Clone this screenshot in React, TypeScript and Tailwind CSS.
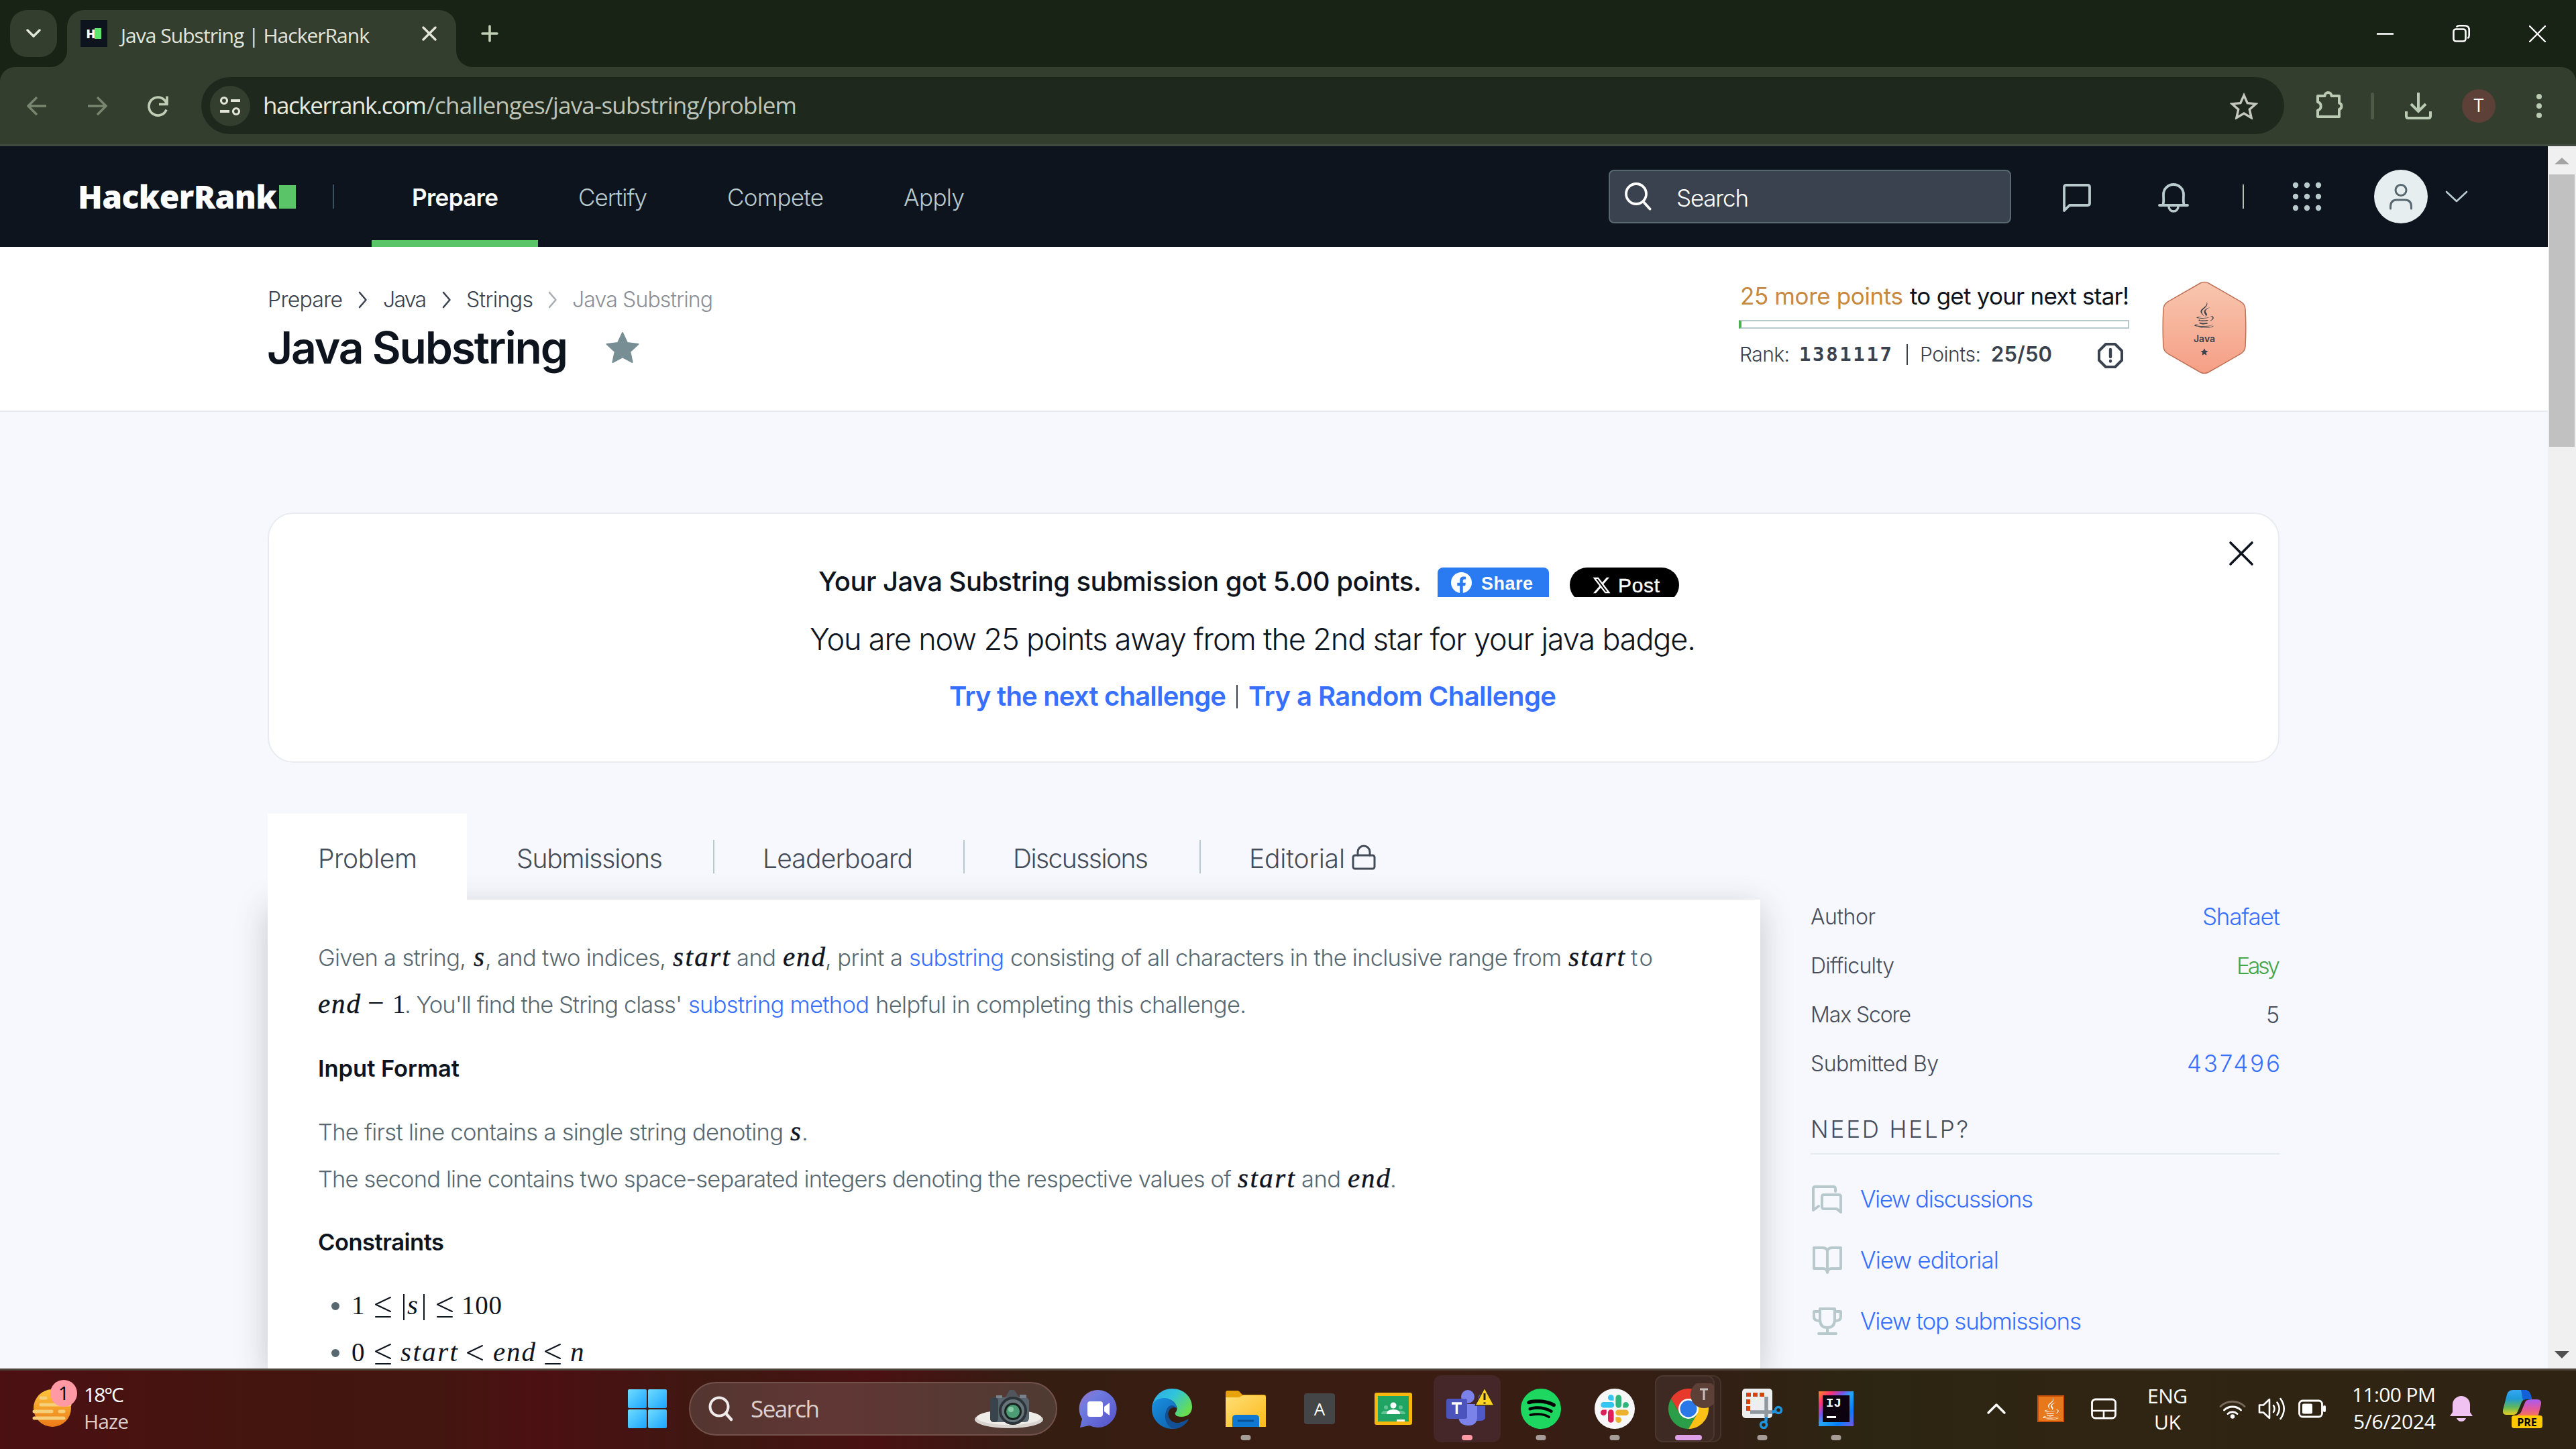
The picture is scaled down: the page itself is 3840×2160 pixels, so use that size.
import { useLayoutEffect, useRef, type ReactNode } from "react";
import { FaJava } from "react-icons/fa";
import { SiSpotify } from "react-icons/si";

/* Spreads a run of text evenly over the width given by its classes. */
function Fit({ className = "", children }: { className?: string; children: string }) {
  const box = useRef<HTMLSpanElement>(null);
  const run = useRef<HTMLSpanElement>(null);
  useLayoutEffect(() => {
    if (!box.current || !run.current) return;
    run.current.style.letterSpacing = "0px";
    const natural = run.current.getBoundingClientRect().width;
    const n = Math.max(1, children.length - 1);
    run.current.style.letterSpacing = `${(box.current.clientWidth - natural) / n}px`;
  }, [children]);
  return (
    <span ref={box} className={`block shrink-0 whitespace-nowrap ${className}`}>
      <span ref={run}>{children}</span>
    </span>
  );
}

function Icon({ w, h, className = "", children }: { w: number; h: number; className?: string; children: ReactNode }) {
  return (
    <svg
      width={w}
      height={h}
      viewBox={`0 0 ${w} ${h}`}
      fill="none"
      stroke="currentColor"
      strokeLinecap="round"
      strokeLinejoin="round"
      className={`block shrink-0 ${className}`}
    >
      {children}
    </svg>
  );
}

const UI = "font-['Open_Sans','Noto_Sans',sans-serif]";

function TabStrip() {
  return (
    <div className={`flex h-[100px] shrink-0 bg-[#192315] pl-[15px] ${UI}`}>
      <div className="mt-[15px] flex size-[70px] items-center justify-center rounded-[25px] bg-[#333e2f] text-[#e0e6d8]">
        <Icon w={22} h={14}><path d="M2 2l9 9 9-9" strokeWidth="3.4" /></Icon>
      </div>
      <Icon w={25} h={25} className="-ml-[10px] mt-[75px]"><path d="M25 0V25H0C14 25 25 14 25 0Z" fill="#333e2f" stroke="none" /></Icon>
      <div className="mt-[15px] flex h-[85px] w-[580px] items-center rounded-t-[25px] bg-[#333e2f] pb-[15px] pl-[20px]">
        <div className="flex size-[40px] items-center justify-center bg-[#0e141e]">
          <span className="text-[18px] leading-none font-extrabold tracking-[-1px] text-white">H</span>
          <span className="h-[16px] w-[10px] bg-[#5ae86b]" />
        </div>
        <Fit className="ml-[20px] mt-[4px] w-[371px] text-[30px] text-[#e2e6da]">Java Substring | HackerRank</Fit>
        <Icon w={22} h={22} className="ml-[78px] text-[#e2e6da]"><path d="M2 2l18 18M20 2L2 20" strokeWidth="3.4" /></Icon>
      </div>
      <Icon w={25} h={25} className="mt-[75px]"><path d="M0 0V25H25C11 25 0 14 0 0Z" fill="#333e2f" stroke="none" /></Icon>
      <Icon w={26} h={26} className="ml-[12px] mt-[37px] text-[#c0ceb5]"><path d="M13 2v22M2 13h22" strokeWidth="3.6" /></Icon>
      <div className="ml-auto mr-[45px] flex h-[100px] items-center gap-[88px] text-white">
        <Icon w={25} h={25}><path d="M0 12.500h25" strokeWidth="2.600" strokeLinecap="butt" /></Icon>
        <Icon w={26} h={26}>
          <rect x="1.500" y="6.500" width="18" height="18" rx="3.500" strokeWidth="2.600" />
          <path d="M6.500 2.500Q7.500 1.300 10 1.300H18Q24.700 1.300 24.700 8V15.500Q24.700 18.500 23.200 19.300" strokeWidth="2.600" />
        </Icon>
        <Icon w={25} h={25}><path d="M1 1l23 23M24 1L1 24" strokeWidth="2.400" /></Icon>
      </div>
    </div>
  );
}

function Toolbar() {
  return (
    <div className="shrink-0 bg-[#192315]">
      <div className={`flex h-[115px] items-center rounded-t-[22px] bg-[#333e2f] pl-[40px] ${UI}`}>
        <Icon w={30} h={30} className="text-[#78856f]"><path d="M15 2L2 15l13 13M2 15h27" strokeWidth="3.400" strokeLinecap="butt" strokeLinejoin="miter" /></Icon>
        <Icon w={30} h={30} className="ml-[60px] text-[#78856f]"><path d="M15 2l13 13-13 13M28 15H1" strokeWidth="3.400" strokeLinecap="butt" strokeLinejoin="miter" /></Icon>
        <Icon w={32} h={32} className="ml-[59px] text-[#c0ceb5]">
          <path d="M29 21.500A13.500 13.500 0 1 1 26.500 7.500L29.500 12" strokeWidth="3.600" strokeLinecap="butt" />
          <path d="M30 1.500V13.500H18" strokeWidth="3.600" strokeLinecap="butt" strokeLinejoin="miter" />
        </Icon>
        <div className="ml-[49px] flex h-[85px] w-[3105px] items-center rounded-full bg-[#1f281d] pl-[13px]">
          <div className="flex size-[60px] items-center justify-center rounded-full bg-[#333e2f] text-[#e2e6da]">
            <Icon w={32} h={30}>
              <circle cx="7" cy="7" r="4.500" strokeWidth="3.200" />
              <path d="M17 7h14M1 23h14" strokeWidth="4" strokeLinecap="butt" />
              <circle cx="25" cy="23" r="4.500" strokeWidth="3.200" />
            </Icon>
          </div>
          <Fit className="ml-[19px] w-[244px] text-[35px] text-[#e6eae0]">hackerrank.com</Fit>
          <Fit className="w-[552px] text-[35px] text-[#bfc4b9]">/challenges/java-substring/problem</Fit>
          <Icon w={42} h={40} className="ml-auto mr-[39px] text-[#c5c9be]">
            <path d="M21 4l5.200 11.600 12.600 1.200-9.500 8.400 2.800 12.400L21 31l-11.100 6.600 2.800-12.400-9.500-8.400 12.600-1.200z" strokeWidth="3.400" strokeLinejoin="miter" />
          </Icon>
        </div>
        <Icon w={44} h={44} className="-mt-[4px] ml-[46px] text-[#bccbb3]">
          <path d="M5 9H14.500A5 5 0 0 1 24.500 9H36V19.500A5 5 0 0 1 36 29V40H4V30.500A6.500 6.500 0 0 0 4 18V9Z" strokeWidth="4" />
        </Icon>
        <span className="ml-[39px] h-[40px] w-[5px] rounded bg-[#4c5a46]" />
        <Icon w={42} h={42} className="ml-[45px] text-[#bccbb3]">
          <path d="M21 1V29M10 18L21 29L32 18" strokeWidth="4" strokeLinecap="butt" strokeLinejoin="miter" />
          <path d="M3 29V36Q3 39 6 39H36Q39 39 39 36V29" strokeWidth="4" strokeLinecap="butt" />
        </Icon>
        <span className="ml-[44px] flex size-[50px] items-center justify-center rounded-full bg-[#5d4037] text-[27px] text-white">T</span>
        <Icon w={8} h={38} className="ml-[61px] text-[#bccbb3]">
          <g fill="currentColor" stroke="none"><circle cx="4" cy="5" r="4" /><circle cx="4" cy="19" r="4" /><circle cx="4" cy="33" r="4" /></g>
        </Icon>
      </div>
      <div className="h-[3px] bg-[#434a41]" />
    </div>
  );
}

function NavBar() {
  return (
    <div className="flex h-[150px] shrink-0 items-center bg-[#0e141e] pl-[116px] text-[35px] font-light text-[#b9cacd]">
      <Fit className="w-[297px] font-['Open_Sans',sans-serif] text-[48px] font-extrabold text-white">HackerRank</Fit>
      <span className="ml-[3px] h-[35px] w-[25px] bg-[#5ac568]" />
      <span className="ml-[55px] h-[36px] w-[2px] bg-[#39505c]" />
      <div className="ml-[56px] flex h-[150px] w-[248px] flex-col justify-between bg-[#0e141e]">
        <span className="h-[10px]" />
        <Fit className="ml-[60px] mt-[2px] w-[129px] font-semibold text-white">Prepare</Fit>
        <span className="h-[10px] w-full bg-[#5ac568]" />
      </div>
      <Fit className="ml-[60px] mt-[2px] w-[103px]">Certify</Fit>
      <Fit className="ml-[119px] mt-[2px] w-[144px]">Compete</Fit>
      <Fit className="ml-[119px] mt-[2px] w-[91px]">Apply</Fit>
      <div className="ml-[960px] flex h-[80px] w-[600px] items-center rounded-[8px] border-2 border-[#576871] bg-[#39424e] pl-[21px] text-white">
        <Icon w={42} h={42}><circle cx="18" cy="17" r="15" strokeWidth="3.800" /><path d="M28.500 28.500L38.500 39.500" strokeWidth="4" /></Icon>
        <Fit className="ml-[36px] mt-[4px] w-[108px]">Search</Fit>
      </div>
      <Icon w={44} h={44} className="ml-[76px] mt-[4px]"><path d="M3 41V6Q3 3 6 3H38Q41 3 41 6V30Q41 33 38 33H11L3 41Z" strokeWidth="3.800" /></Icon>
      <Icon w={48} h={46} className="ml-[98px] mt-[2px]">
        <path d="M3 35H45M8 35C10 31 9 26 9 19A15 15 0 0 1 39 19C39 26 38 31 40 35" strokeWidth="3.800" />
        <path d="M17 37A7 7 0 0 0 31 37" strokeWidth="3.600" />
      </Icon>
      <span className="ml-[79px] h-[36px] w-[2px] bg-[#b9c0b4]" />
      <Icon w={44} h={44} className="ml-[72px]">
        <g fill="currentColor" stroke="none">
          {[5, 22, 39].map((y) => [5, 22, 39].map((x) => <circle key={`${x}-${y}`} cx={x} cy={y} r="4.200" />))}
        </g>
      </Icon>
      <span className="ml-[78px] flex size-[80px] items-center justify-center rounded-full bg-[#e7eef0] text-[#576871]">
        <Icon w={36} h={40}><circle cx="18" cy="10.500" r="8" strokeWidth="3" /><path d="M2.500 38V35Q2.500 25 12 25H24Q33.500 25 33.500 35V38" strokeWidth="3" /></Icon>
      </span>
      <Icon w={34} h={20} className="ml-[26px]"><path d="M2 3l15 14L32 3" strokeWidth="2.600" /></Icon>
    </div>
  );
}

function Crumb({ className }: { className: string }) {
  return <Icon w={14} h={26} className={className}><path d="M2 2l9.500 11L2 24" strokeWidth="2.600" /></Icon>;
}

function ProblemHeader() {
  return (
    <div className="flex h-[246px] shrink-0 border-b-2 border-[#ebebf2] bg-white pl-[399px] text-[#39424e]">
      <div className="w-[2193px] pt-[54px]">
        <div className="flex h-[50px] items-center text-[32px] font-light">
          <Fit className="w-[112px]">Prepare</Fit>
          <Crumb className="ml-[23px]" />
          <Fit className="ml-[23px] w-[65px]">Java</Fit>
          <Crumb className="ml-[23px]" />
          <Fit className="ml-[22px] w-[100px]">Strings</Fit>
          <Crumb className="ml-[22px] text-[#a9adb2]" />
          <Fit className="ml-[22px] w-[210px] text-[#8c9096]">Java Substring</Fit>
        </div>
        <div className="mt-[1px] flex h-[90px] items-center">
          <Fit className="-ml-[1px] w-[449px] text-[66px] leading-[90px] font-[580] text-[#0e141e]">Java Substring</Fit>
          <Icon w={52} h={50} className="ml-[55px] text-[#778f94]">
            <path d="M26 3l7 15 16.500 2-12.200 11.200L40.600 47 26 39.300 11.400 47l3.300-15.800L2.500 20 19 18z" fill="currentColor" strokeWidth="2" />
          </Icon>
        </div>
      </div>
      <div className="w-[582px] pt-[48px]">
        <div className="flex h-[50px] items-center text-[35px] text-[#0e141e]">
          <Fit className="ml-[2px] w-[243px] text-[#c78840]">25 more points</Fit>
          <Fit className="ml-[10px] w-[327px]">to get your next star!</Fit>
        </div>
        <div className="mt-[11px] h-[13px] border-2 border-l-4 border-[#b7c9cc] border-l-[#4caf50]" />
        <div className="mt-[13px] flex h-[50px] items-center text-[30px] font-light">
          <Fit className="ml-[1px] w-[75px]">Rank:</Fit>
          <Fit className="ml-[14px] mt-[2px] w-[138px] font-['DejaVu_Sans_Mono',monospace] text-[29px] font-bold">1381117</Fit>
          <span className="ml-[22px] h-[31px] w-[2px] bg-[#39424e]" />
          <Fit className="ml-[18px] w-[91px]">Points:</Fit>
          <Fit className="ml-[15px] w-[91px] text-[31px] font-semibold">25/50</Fit>
          <Icon w={40} h={40} className="ml-[67px] mt-[4px]">
            <path d="M13 3H27L37 13V27L27 37H13L3 27V13Z" strokeWidth="4" />
            <path d="M20 11V22M20 28V28.500" strokeWidth="4.400" />
          </Icon>
        </div>
      </div>
      <div className="relative ml-[49px] mt-[51px] h-[139px] w-[126px]">
        <svg viewBox="0 0 126 140" className="absolute inset-0 size-full">
          <defs>
            <linearGradient id="badge" x1="0" y1="0" x2="0" y2="1"><stop offset="0" stopColor="#f8c6ae" /><stop offset="1" stopColor="#f59f86" /></linearGradient>
          </defs>
          <path d="M57 3Q63 0 69 3L118 31Q124 35 124.500 42Q126 70 124.500 98Q124 105 118 109L69 137Q63 140 57 137L8 109Q2 105 1.500 98Q0 70 1.500 42Q2 35 8 31Z" fill="url(#badge)" stroke="#bd7258" strokeWidth="1.500" />
          <path d="M63 101l1.700 3.500 3.800.5-2.800 2.600.7 3.900-3.400-1.900-3.400 1.900.7-3.900-2.800-2.600 3.800-.5z" fill="#39424e" />
        </svg>
        <FaJava className="absolute left-[43px] top-[31px] size-[39px] text-[#39424e]" />
        <span className="absolute left-0 top-[74px] w-full text-center text-[14px] leading-[24px] font-semibold">Java</span>
      </div>
    </div>
  );
}

function ResultCard() {
  return (
    <div className="relative h-[373px] w-[2999px] rounded-[38px] border-2 border-[#e9ebf1] bg-white pt-[71px] text-[#0e141e]">
      <div className="ml-[819px] flex h-[60px] items-center text-[40px]">
        <Fit className="w-[899px] font-medium">Your Java Substring submission got 5.00 points.</Fit>
        <span className="ml-[24px] mt-[9px] flex h-[44px] w-[166px] items-center self-start rounded-t-[8px] bg-[#2a7af2] font-['Liberation_Sans',sans-serif] text-[27px] font-bold text-white">
          <svg viewBox="0 0 30 30" className="ml-[20px] size-[31px]">
            <circle cx="15" cy="15" r="15" fill="#fff" />
            <path d="M12.700 30V19.500H9V15.200H12.700V12C12.700 8.200 14.900 6.200 18.200 6.200C19.800 6.200 21.300 6.500 21.300 6.500V10.100H19.500C17.700 10.100 17.200 11.200 17.200 12.300V15.200H21.200L20.500 19.500H17.200V30Z" fill="#2a7af2" />
          </svg>
          <Fit className="ml-[14px] mt-[4px] w-[77px]">Share</Fit>
        </span>
        <span className="ml-[31px] mt-[9px] h-[44px] w-[163px] self-start overflow-hidden">
          <span className="flex h-[52px] items-center rounded-full bg-black pl-[33px] font-['Liberation_Sans',sans-serif] text-[30px] text-white">
            <svg viewBox="0 0 24 24" className="size-[29px]" fill="#fff"><path d="M18.244 2.250h3.308l-7.227 8.260 8.502 11.240H16.170l-5.214-6.817L4.990 21.750H1.680l7.730-8.835L1.254 2.250H8.080l4.713 6.231zm-1.161 17.520h1.833L7.084 4.126H5.117z" /></svg>
            <Fit className="ml-[10px] w-[62px] [-webkit-text-stroke:0.4px_white]">Post</Fit>
          </span>
        </span>
      </div>
      <Fit className="ml-[806px] mt-[26px] h-[60px] w-[1321px] text-[45px] leading-[60px] font-light">You are now 25 points away from the 2nd star for your java badge.</Fit>
      <div className="ml-[1014px] mt-[25px] flex h-[60px] items-center text-[40px] font-semibold text-[#3770ff]">
        <Fit className="w-[413px]">Try the next challenge</Fit>
        <span className="ml-[15px] h-[35px] w-[2px] bg-[#39424e]" />
        <Fit className="ml-[16px] w-[459px]">Try a Random Challenge</Fit>
      </div>
      <Icon w={38} h={38} className="absolute right-[36px] top-[40px]"><path d="M3 3l32 32M35 3L3 35" strokeWidth="3.600" /></Icon>
    </div>
  );
}

function Tabs() {
  return (
    <div className="flex h-[128px] items-center text-[39px] font-light text-[#454c59]">
      <div className="relative z-10 flex h-[128px] w-[297px] items-center bg-white pl-[75px]"><Fit className="mt-[7px] w-[148px]">Problem</Fit></div>
      <Fit className="ml-[74px] mt-[7px] w-[218px]">Submissions</Fit>
      <span className="ml-[75px] h-[50px] w-[2px] bg-[#b7c9cc]" />
      <Fit className="ml-[72px] mt-[7px] w-[224px]">Leaderboard</Fit>
      <span className="ml-[75px] h-[50px] w-[2px] bg-[#b7c9cc]" />
      <Fit className="ml-[72px] mt-[7px] w-[202px]">Discussions</Fit>
      <span className="ml-[76px] h-[50px] w-[2px] bg-[#b7c9cc]" />
      <Fit className="ml-[72px] mt-[7px] w-[143px]">Editorial</Fit>
      <Icon w={36} h={38} className="ml-[10px] mt-[2px]">
        <rect x="2" y="16" width="32" height="20" rx="3" strokeWidth="3" />
        <path d="M9 16V11A9 9 0 0 1 27 11V16" strokeWidth="3" />
      </Icon>
    </div>
  );
}

const MATH = "font-['Liberation_Serif',serif] italic text-[41px] leading-none text-[#0e141e] [-webkit-text-stroke:0.4px_#0e141e]";
const MLIST = "font-['Liberation_Serif',serif] italic text-[41px] leading-none text-[#0e141e]";
const NUM = "font-['Liberation_Serif',serif] text-[39px] leading-none text-[#0e141e]";

function Leq() {
  return <Icon w={26} h={34} className="translate-y-[7px] text-[#0e141e]"><path d="M24 2L2 12.500L24 23M2 31H24" strokeWidth="2" /></Icon>;
}

/* Row of math symbols that keeps the baseline of the surrounding body text. */
function ConstraintRow({ children }: { children: ReactNode }) {
  return (
    <div className="flex h-[70px] items-baseline">
      <span className="w-0">{"\u200b"}</span>
      <span className="ml-[20px] mr-[18px] size-[12px] -translate-y-[6px] rounded-full bg-[#576871]" />
      {children}
    </div>
  );
}

function Statement() {
  return (
    <div className="h-[699px] w-[2225px] bg-white pl-[75px] pt-[52px] text-[34.500px] leading-[70px] font-light text-[#576871] shadow-[0_12px_46px_rgba(40,40,50,0.24)]">
      <div className="flex h-[70px] items-baseline">
        <Fit className="w-[221px]">Given a string,</Fit>
        <Fit className={`ml-[11px] w-[17px] ${MATH}`}>s</Fit>
        <Fit className="w-[270px]">, and two indices,</Fit>
        <Fit className={`ml-[10px] w-[85px] ${MATH}`}>start</Fit>
        <Fit className="ml-[10px] w-[59px]">and</Fit>
        <Fit className={`ml-[10px] w-[63px] ${MATH}`}>end</Fit>
        <Fit className="w-[116px]">, print a</Fit>
        <Fit className="ml-[9px] w-[142px] text-[#3770ff]">substring</Fit>
        <Fit className="ml-[9px] w-[822px]">consisting of all characters in the inclusive range from</Fit>
        <Fit className={`ml-[10px] w-[84px] ${MATH}`}>start</Fit>
        <Fit className="ml-[9px] w-[33px]">to</Fit>
      </div>
      <div className="flex h-[70px] items-baseline">
        <Fit className={`w-[63px] ${MATH}`}>end</Fit>
        <span className={`ml-[9px] w-[29px] text-center text-[44px] font-['Liberation_Serif',serif] leading-none text-[#0e141e]`}>−</span>
        <Fit className={`ml-[10px] w-[18px] ${NUM}`}>1</Fit>
        <Fit className="w-[414px]">. You'll find the String class'</Fit>
        <Fit className="ml-[9px] w-[270px] text-[#3770ff]">substring method</Fit>
        <Fit className="ml-[9px] w-[553px]">helpful in completing this challenge.</Fit>
      </div>
      <Fit className="mt-[25px] w-[211px] font-semibold text-[#0e141e]">Input Format</Fit>
      <div className="mt-[25px] flex h-[70px] items-baseline">
        <Fit className="w-[694px]">The first line contains a single string denoting</Fit>
        <Fit className={`ml-[10px] w-[17px] ${MATH}`}>s</Fit>
        <Fit className="w-[10px]">.</Fit>
      </div>
      <div className="flex h-[70px] items-baseline">
        <Fit className="w-[1362px]">The second line contains two space-separated integers denoting the respective values of</Fit>
        <Fit className={`ml-[9px] w-[85px] ${MATH}`}>start</Fit>
        <Fit className="ml-[10px] w-[59px]">and</Fit>
        <Fit className={`ml-[10px] w-[63px] ${MATH}`}>end</Fit>
        <Fit className="w-[10px]">.</Fit>
      </div>
      <Fit className="mt-[24px] w-[188px] font-semibold text-[#0e141e]">Constraints</Fit>
      <div className="h-[25px]" />
      <ConstraintRow>
        <Fit className={`mr-[15px] w-[19px] ${NUM}`}>1</Fit>
        <Leq />
        <span className="ml-[17px] h-[39px] w-[2px] translate-y-[9px] bg-[#0e141e]" />
        <Fit className={`ml-[4px] w-[17px] ${MLIST}`}>s</Fit>
        <span className="ml-[7px] mr-[17px] h-[39px] w-[2px] translate-y-[9px] bg-[#0e141e]" />
        <Leq />
        <Fit className={`ml-[12px] w-[60px] ${NUM}`}>100</Fit>
      </ConstraintRow>
      <ConstraintRow>
        <Fit className={`mr-[14px] w-[20px] ${NUM}`}>0</Fit>
        <Leq />
        <Fit className={`ml-[13px] w-[85px] ${MLIST}`}>start</Fit>
        <Icon w={26} h={26} className="ml-[13px] mr-[14px] translate-y-[1px] text-[#0e141e]"><path d="M24 2L2 12.500L24 23" strokeWidth="2" /></Icon>
        <Fit className={`mr-[13px] w-[63px] ${MLIST}`}>end</Fit>
        <Leq />
        <Fit className={`ml-[13px] w-[24px] ${MLIST}`}>n</Fit>
      </ConstraintRow>
    </div>
  );
}

function Sidebar() {
  return (
    <div className="ml-[75px] w-[700px] pt-[117px] font-light text-[#454c59]">
      <div className="flex h-[73px] items-center justify-between text-[32px]"><Fit className="w-[97px]">Author</Fit><Fit className="w-[116px] text-[35px] text-[#3770ff]">Shafaet</Fit></div>
      <div className="flex h-[73px] items-center justify-between text-[32px]"><Fit className="w-[125px]">Difficulty</Fit><Fit className="w-[65px] text-[34px] text-[#43a64b]">Easy</Fit></div>
      <div className="flex h-[73px] items-center justify-between text-[32px]"><Fit className="w-[150px]">Max Score</Fit><Fit className="w-[21px] text-[34px]">5</Fit></div>
      <div className="flex h-[73px] items-center justify-between text-[32px]"><Fit className="w-[191px]">Submitted By</Fit><Fit className="w-[139px] text-[35px] text-[#3770ff]">437496</Fit></div>
      <div className="mt-[36px] h-[63px] border-b-2 border-[#e4ecee] text-[35px] leading-[50px]"><Fit className="w-[235px]">NEED HELP?</Fit></div>
      <div className="mt-[21px] text-[35px] text-[#3770ff]">
        <div className="flex h-[91px] items-center">
          <Icon w={48} h={44} className="text-[#b7c9cc]">
            <path d="M37 10V6Q37 3 34 3H7Q4 3 4 6V38L12 32" strokeWidth="4" />
            <path d="M20 15H42Q45 15 45 18V41L39 36H20Q17 36 17 33V18Q17 15 20 15Z" strokeWidth="4" />
          </Icon>
          <Fit className="ml-[26px] w-[258px]">View discussions</Fit>
        </div>
        <div className="flex h-[91px] items-center">
          <Icon w={48} h={44} className="translate-x-[1px] text-[#b7c9cc]">
            <path d="M24 7Q22 3 17 3H4V34H18Q23 34 24 40Q25 34 30 34H44V3H31Q26 3 24 7ZM24 7V40" strokeWidth="4" />
          </Icon>
          <Fit className="ml-[26px] w-[207px]">View editorial</Fit>
        </div>
        <div className="flex h-[91px] items-center">
          <Icon w={48} h={44} className="translate-x-[1px] text-[#b7c9cc]">
            <path d="M13 3H35V19Q35 31 24 31Q13 31 13 19ZM24 31V40M11 40H37" strokeWidth="4" />
            <path d="M13 7H4V15Q4 21 13 21M35 7H44V15Q44 21 35 21" strokeWidth="4" />
          </Icon>
          <Fit className="ml-[26px] w-[330px]">View top submissions</Fit>
        </div>
      </div>
    </div>
  );
}

function PageScrollbar() {
  return (
    <div className="flex w-[42px] shrink-0 flex-col items-center bg-[#f0f0f0]">
      <Icon w={22} h={10} className="mt-[17px] text-[#a3a3a3]"><path d="M11 0L22 10H0Z" fill="currentColor" stroke="none" /></Icon>
      <span className="mt-[15px] h-[406px] w-[38px] bg-[#c1c1c1]" />
      <Icon w={22} h={11} className="mb-[15px] mt-auto text-[#505050]"><path d="M11 11L22 0H0Z" fill="currentColor" stroke="none" /></Icon>
    </div>
  );
}

function TaskItem({ dot = "", active = "", stacked = false, children }: { dot?: string; active?: string; stacked?: boolean; children: ReactNode }) {
  return (
    <div className="relative flex h-[120px] w-[110px] shrink-0 items-center justify-center">
      {stacked && <span className="absolute left-[18px] top-[10px] h-[100px] w-[86px] rounded-[12px] border-2 border-[#46332a] bg-[#37251e]" />}
      {active && <span className={`absolute left-[5px] top-[10px] h-[100px] rounded-[12px] ${active}`} />}
      <div className="relative">{children}</div>
      {dot && <span className={`absolute bottom-[13px] left-1/2 h-[8px] -translate-x-1/2 rounded-full ${dot}`} />}
    </div>
  );
}

function Camera() {
  return (
    <svg width="104" height="60" viewBox="0 0 104 60" className="block shrink-0">
      <ellipse cx="52" cy="46" rx="51" ry="13" fill="#d9d4cf" />
      <ellipse cx="52" cy="43" rx="48" ry="11" fill="#efece8" />
      <path d="M46 14L53 2H60L68 14Z" fill="#50565c" />
      <rect x="24" y="13" width="58" height="37" rx="6" fill="#58646e" />
      <rect x="24" y="13" width="12" height="37" rx="5" fill="#39434c" />
      <rect x="68" y="9" width="10" height="5" fill="#77828b" />
      <rect x="33" y="10" width="9" height="4" fill="#77828b" />
      <circle cx="58" cy="33" r="21" fill="#2c3439" />
      <circle cx="58" cy="33" r="17" fill="#68757c" />
      <circle cx="58" cy="34" r="13" fill="#182420" />
      <circle cx="58" cy="34" r="10" fill="#4c9c76" />
      <circle cx="55" cy="31" r="4" fill="#86c8a4" />
    </svg>
  );
}

function Taskbar() {
  return (
    <div className={`flex h-[120px] shrink-0 items-center border-t-[3px] border-[#4f443a] bg-[linear-gradient(90deg,#4c1013_0%,#44150f_10%,#431610_17%,#4c1013_21%,#3e1811_28%,#4a1113_34%,#351d12_40%,#3b1c12_55%,#331f14_66%,#2c2612_73%,#302413_80%,#2f2413_100%)] pb-[3px] text-[30px] text-white ${UI}`}>
      <div className="relative ml-[48px] h-[76px] w-[70px] -translate-y-[6px]">
        <svg viewBox="0 0 70 76" className="absolute inset-0 size-full">
          <defs><linearGradient id="sun" x1="0" y1="0" x2="0" y2="1"><stop offset="0" stopColor="#fcc43a" /><stop offset="1" stopColor="#ec7a18" /></linearGradient></defs>
          <circle cx="30" cy="43" r="28" fill="url(#sun)" />
          <g stroke="#f5cf7a" strokeWidth="5" strokeLinecap="round"><path d="M13 28H20M13 38H56M3 48H29M41 48H47M3 58H47" /></g>
          <circle cx="47" cy="21" r="20" fill="#ff99a4" />
        </svg>
        <span className="absolute left-[37px] top-[4px] w-[20px] text-center text-[28px] leading-[32px] text-black">1</span>
      </div>
      <div className="ml-[7px] w-[102px] -translate-y-[1px]">
        <Fit className="h-[40px] w-[60px] leading-[40px]">18°C</Fit>
        <Fit className="h-[40px] w-[67px] leading-[40px] text-[#dccdca]">Haze</Fit>
      </div>
      <svg width="58" height="58" viewBox="0 0 58 58" className="ml-[709px] block shrink-0">
        <defs><linearGradient id="win" x1="0" y1="0" x2="1" y2="1"><stop offset="0" stopColor="#70dcff" /><stop offset="1" stopColor="#1aa4ff" /></linearGradient></defs>
        <g fill="url(#win)"><rect width="28" height="28" rx="2" /><rect x="30" width="28" height="28" rx="2" /><rect y="30" width="28" height="28" rx="2" /><rect x="30" y="30" width="28" height="28" rx="2" /></g>
      </svg>
      <div className="ml-[33px] flex h-[80px] w-[549px] items-center rounded-full border-2 border-[#73524c] bg-[linear-gradient(90deg,#543530,#613735_40%,#5c3733_55%,#4f3b32)] pl-[27px] text-[35px] text-[#ddd0ce]">
        <Icon w={38} h={38} className="text-[#f0ecec]"><circle cx="16" cy="16" r="13.500" strokeWidth="4" /><path d="M26 26L34 35" strokeWidth="4.500" /></Icon>
        <Fit className="ml-[25px] w-[103px]">Search</Fit>
        <span className="ml-[230px]"><Camera /></span>
      </div>
      <div className="ml-[6px] flex">
        <TaskItem>
          <svg width="58" height="58" viewBox="0 0 58 58" className="block">
            <defs><linearGradient id="chat" x1="0" y1="0" x2="1" y2="1"><stop offset="0" stopColor="#a06fc0" /><stop offset=".3" stopColor="#6f7ce0" /><stop offset="1" stopColor="#5450c8" /></linearGradient></defs>
            <path d="M29 1A28 28 0 1 1 16 54L2 57L5 44A28 28 0 0 1 29 1Z" fill="url(#chat)" />
            <rect x="13" y="18" width="23" height="23" rx="4" fill="#fff" /><path d="M38 26L46 20V39L38 33Z" fill="#fff" />
          </svg>
        </TaskItem>
        <TaskItem>
          <svg width="60" height="60" viewBox="0 0 60 60" className="block">
            <defs>
              <linearGradient id="edgeTop" x1="0" y1="0" x2="1" y2=".6"><stop offset="0" stopColor="#2fa8e8" /><stop offset=".5" stopColor="#30c4dc" /><stop offset="1" stopColor="#68dd50" /></linearGradient>
              <linearGradient id="edgeLow" x1="0" y1="0" x2="1" y2="1"><stop offset="0" stopColor="#1a90e0" /><stop offset="1" stopColor="#0c59a4" /></linearGradient>
            </defs>
            <path d="M0 29C2 11 15 0 30 0C48 0 60 13 60 27C60 37 53 42 44 42C37 42 34 39 35 36C38 33 38 29 37 27C34 17 24 14 15 15C7 16 2 22 0 29Z" fill="url(#edgeTop)" />
            <path d="M0 30C0 19 9 14 18 14C29 14 37 22 37 29C31 25 24 31 24 38C24 48 33 54 44 50C50 48 53 46 55 45C51 54 41 60 31 60C14 60 0 47 0 30Z" fill="url(#edgeLow)" />
            <path d="M24 36C24 49 36 54 46 50C50 48 53 46 55 45C51 54 41 60 33 60C20 56 16 40 24 28C27 24 33 24 36 28C30 27 24 31 24 36Z" fill="#134f94" />
          </svg>
        </TaskItem>
        <TaskItem dot="w-[15px] bg-[#a69d98]">
          <svg width="60" height="54" viewBox="0 0 60 54" className="block">
            <defs><linearGradient id="fold" x1="0" y1="0" x2="1" y2="1"><stop offset="0" stopColor="#ffdf75" /><stop offset="1" stopColor="#fcb91c" /></linearGradient></defs>
            <path d="M0 3Q0 0 3 0H18Q20 0 22 3L25 6H57Q60 6 60 9V20H0Z" fill="#e8a30a" />
            <path d="M0 10H20L26 7H57Q60 7 60 10V54H0Z" fill="url(#fold)" />
            <path d="M10 54V41Q10 36 16 36H44Q50 36 50 41V54Z" fill="#0f78d0" /><path d="M18 45H42" stroke="#0a4f91" strokeWidth="3" />
          </svg>
        </TaskItem>
        <TaskItem>
          <span className="flex size-[46px] items-center justify-center rounded-[4px] bg-[#444546] text-[26px]">A</span>
        </TaskItem>
        <TaskItem>
          <svg width="56" height="48" viewBox="0 0 56 48" className="block">
            <rect width="56" height="48" rx="3" fill="#f6b70e" /><rect x="5" y="5" width="46" height="38" fill="#1fa463" />
            <g fill="#63c493"><circle cx="17" cy="22" r="3" /><circle cx="39" cy="22" r="3" /><path d="M10 32Q10 27 17 27H39Q46 27 46 32Z" /></g>
            <circle cx="28" cy="19" r="4.500" fill="#fff" /><path d="M18 32Q18 25 28 25Q38 25 38 32Z" fill="#fff" /><rect x="33" y="40" width="12" height="3" fill="#fff" />
          </svg>
        </TaskItem>
        <TaskItem active="w-[100px] bg-[#452629]" dot="w-[16px] bg-[#ff99a4]">
          <svg width="72" height="60" viewBox="0 0 72 60" className="block translate-x-[5px] -translate-y-[2px]">
            <circle cx="32" cy="14" r="10" fill="#7b83eb" /><circle cx="54" cy="17" r="7" fill="#5059c9" />
            <path d="M40 25H58V44Q58 50 50 50H40Z" fill="#5059c9" />
            <path d="M20 25H46V44Q46 57 33 57Q18 57 18 42Z" fill="#7b83eb" />
            <rect x="0" y="17" width="31" height="30" rx="3" fill="#4b53bc" />
            <path d="M8 24H23M15.500 24V40" stroke="#fff" strokeWidth="3.500" />
            <path d="M57 1L71 27H43Z" fill="#ffd321" stroke="#3c2a18" strokeWidth="1.500" strokeLinejoin="round" />
            <path d="M57 9V19M57 22.500V24.500" stroke="#222" strokeWidth="3" />
          </svg>
        </TaskItem>
        <TaskItem dot="w-[15px] bg-[#a69d98]">
          <span className="block size-[60px] rounded-full bg-black"><SiSpotify className="size-[60px] text-[#1ed760]" /></span>
        </TaskItem>
        <TaskItem dot="w-[15px] bg-[#a69d98]">
          <svg width="60" height="60" viewBox="0 0 60 60" className="block">
            <circle cx="30" cy="30" r="30" fill="#f7f7f7" />
            <path d="M13.500 20H25A4.300 4.300 0 0 1 25 28.600H13.500A4.300 4.300 0 0 1 13.500 20ZM24.300 9A4.300 4.300 0 0 1 28.600 13.500V17.800H24.300A4.300 4.300 0 0 1 24.300 9Z" fill="#36c5f0" />
            <path d="M40 13.500V24.500A4.300 4.300 0 0 1 31.400 24.500V13.500A4.300 4.300 0 0 1 40 13.500ZM51 24.300A4.300 4.300 0 0 1 46.500 28.600H42.200V24.300A4.300 4.300 0 0 1 51 24.300Z" fill="#2eb67d" />
            <path d="M46.500 40H35.500A4.300 4.300 0 0 1 35.500 31.400H46.500A4.300 4.300 0 0 1 46.500 40ZM35.700 51A4.300 4.300 0 0 1 31.400 46.500V42.200H35.700A4.300 4.300 0 0 1 35.700 51Z" fill="#ecb22e" />
            <path d="M20 46.500V35.500A4.300 4.300 0 0 1 28.600 35.500V46.500A4.300 4.300 0 0 1 20 46.500ZM9 35.700A4.300 4.300 0 0 1 13.500 31.400H17.800V35.700A4.300 4.300 0 0 1 9 35.700Z" fill="#e01e5a" />
          </svg>
        </TaskItem>
        <TaskItem stacked active="w-[89px] border-2 border-[#4d362d] bg-[#3e2a22]" dot="w-[40px] bg-[#dc9fe8]">
          <svg width="76" height="76" viewBox="0 0 76 76" className="block">
            <path d="M12 23A30 30 0 0 1 64 23H38L25 45.500Z" fill="#e8392d" />
            <path d="M12 23A30 30 0 0 0 38 68L51 45.500L38 53L25 45.500Z" fill="#2a9e48" />
            <path d="M64 23A30 30 0 0 1 38 68L51 45.500L38 23Z" fill="#fbc116" />
            <circle cx="38" cy="38" r="15" fill="#fff" /><circle cx="38" cy="38" r="12.500" fill="#2a78e8" />
            <circle cx="61" cy="17" r="20" fill="#5d4037" /><path d="M55 9H67M61 9V25" stroke="#c8bebb" strokeWidth="3" />
          </svg>
        </TaskItem>
        <TaskItem dot="w-[15px] bg-[#a69d98]">
          <svg width="60" height="60" viewBox="0 0 60 60" className="block">
            <rect width="45" height="44" rx="5" fill="#eceef0" />
            <path d="M6 9H33M9 16V33" stroke="#d8430c" strokeWidth="6" strokeDasharray="7 3" fill="none" />
            <path d="M36 12V42M12 35H44" stroke="#8f989f" strokeWidth="5.500" />
            <circle cx="54" cy="32" r="4.500" fill="none" stroke="#1e95dc" strokeWidth="3.500" /><circle cx="32" cy="54" r="4.500" fill="none" stroke="#1e95dc" strokeWidth="3.500" />
            <path d="M44 35L50 34M36 42L35 51" stroke="#1e95dc" strokeWidth="4.500" />
          </svg>
        </TaskItem>
        <TaskItem dot="w-[15px] bg-[#a69d98]">
          <div className="flex size-[52px] items-center justify-center bg-[linear-gradient(135deg,#fc8a20_0%,#fc3178_20%,#7f52e8_36%,#20a8f5_50%,#087cfa_75%,#7b55e0_100%)]">
            <div className="relative size-[40px] bg-[#0d0210] pl-[5px] font-['Liberation_Mono',monospace] text-[19px] leading-[24px] font-bold">
              IJ<span className="absolute bottom-[6px] left-[6px] h-[3px] w-[14px] bg-white" />
            </div>
          </div>
        </TaskItem>
      </div>
      <Icon w={30} h={18} className="ml-[169px]"><path d="M3 15L15 3L27 15" strokeWidth="3.400" /></Icon>
      <span className="ml-[46px] flex size-[40px] items-center justify-center border-2 border-[#c8500a] bg-[#e8781c]"><FaJava className="size-[32px]" /></span>
      <Icon w={38} h={32} className="ml-[40px]"><rect x="1.500" y="2" width="35" height="28" rx="5" strokeWidth="2.800" /><path d="M2 19H36M19 19V30" strokeWidth="2.600" /></Icon>
      <div className="ml-[46px] w-[61px]">
        <Fit className="h-[39px] w-[60px] leading-[39px]">ENG</Fit>
        <Fit className="ml-[10px] h-[39px] w-[40px] leading-[39px]">UK</Fit>
      </div>
      <Icon w={40} h={30} className="ml-[46px]">
        <path d="M2 11.500A26 26 0 0 1 38 11.500" strokeWidth="2.800" stroke="#76695c" />
        <path d="M7.500 17A18 18 0 0 1 32.500 17M13 22.500A10.500 10.500 0 0 1 27 22.500" strokeWidth="3" />
        <circle cx="20" cy="26.500" r="3.200" fill="currentColor" stroke="none" />
      </Icon>
      <Icon w={42} h={36} className="ml-[18px]">
        <path d="M2 12.500H8L17 4V32L8 23.500H2Z" strokeWidth="2.600" />
        <path d="M23 13Q26 18 23 23M28.500 8.500Q35 18 28.500 27.500M33.500 3Q44 18 33.500 33" strokeWidth="2.500" />
      </Icon>
      <Icon w={42} h={28} className="ml-[18px]">
        <rect x="1.500" y="2" width="34" height="24" rx="5" strokeWidth="2.800" /><rect x="6" y="6.500" width="15" height="15" rx="2" fill="currentColor" stroke="none" />
        <path d="M39 11V17" strokeWidth="4" />
      </Icon>
      <div className="ml-[38px] w-[126px] -translate-y-[1px]">
        <Fit className="h-[40px] w-[125px] leading-[40px]">11:00 PM</Fit>
        <Fit className="ml-[2px] h-[40px] w-[123px] leading-[40px]">5/6/2024</Fit>
      </div>
      <Icon w={34} h={40} className="ml-[20px] text-[#f0c2f2]">
        <path d="M4 25V14A13 13 0 0 1 30 14V25L34 31H0Z" fill="currentColor" stroke="none" /><path d="M10 34H24Q22 39 17 39Q12 39 10 34Z" fill="currentColor" stroke="none" />
      </Icon>
      <div className="relative ml-[44px] h-[58px] w-[60px]">
        <svg viewBox="0 0 60 58" className="absolute inset-0 size-full">
          <defs>
            <linearGradient id="copA" x1="0" y1="0" x2="0" y2="1"><stop offset="0" stopColor="#35a8f5" /><stop offset=".35" stopColor="#1f9bd8" /><stop offset=".7" stopColor="#62b85a" /><stop offset="1" stopColor="#e8cf20" /></linearGradient>
            <linearGradient id="copB" x1="0" y1="0" x2="0" y2="1"><stop offset="0" stopColor="#a85cf0" /><stop offset=".5" stopColor="#e058a0" /><stop offset="1" stopColor="#fb7a4a" /></linearGradient>
          </defs>
          <path d="M16 1H34Q42 1 44 15H36Q30 15 28 22L23 34Q21 38 16 38H6Q0 38 1 31L7 8Q9 1 16 1Z" fill="url(#copA)" />
          <path d="M28 1H34Q42 1 44 15H36Q33 15 31 17Z" fill="#1460d8" />
          <path d="M44 15H52Q59 15 58 22L53 42H12Q24 40 28 32L32 21Q35 15 44 15Z" fill="url(#copB)" />
          <path d="M36 15L28 34Q26 38 21 38L28 22Q30 15 36 15Z" fill="#2f2413" />
        </svg>
        <span className="absolute bottom-0 left-[14px] flex h-[19px] w-[46px] items-center justify-center rounded-[4px] bg-[#ffc800] text-[16px] font-bold text-black">PRE</span>
      </div>
    </div>
  );
}

export default function App() {
  return (
    <div className="flex h-[2160px] w-[3840px] flex-col overflow-hidden bg-[#f7f8fd] font-['Inter',sans-serif]">
      <TabStrip />
      <Toolbar />
      <div className="flex h-[1822px] shrink-0 overflow-hidden">
        <div className="flex w-[3798px] shrink-0 flex-col overflow-hidden">
          <NavBar />
          <ProblemHeader />
          <div className="pl-[399px] pt-[150px]">
            <ResultCard />
            <div className="mt-[76px] flex">
              <div className="w-[2225px]">
                <Tabs />
                <Statement />
              </div>
              <Sidebar />
            </div>
          </div>
        </div>
        <PageScrollbar />
      </div>
      <Taskbar />
    </div>
  );
}
